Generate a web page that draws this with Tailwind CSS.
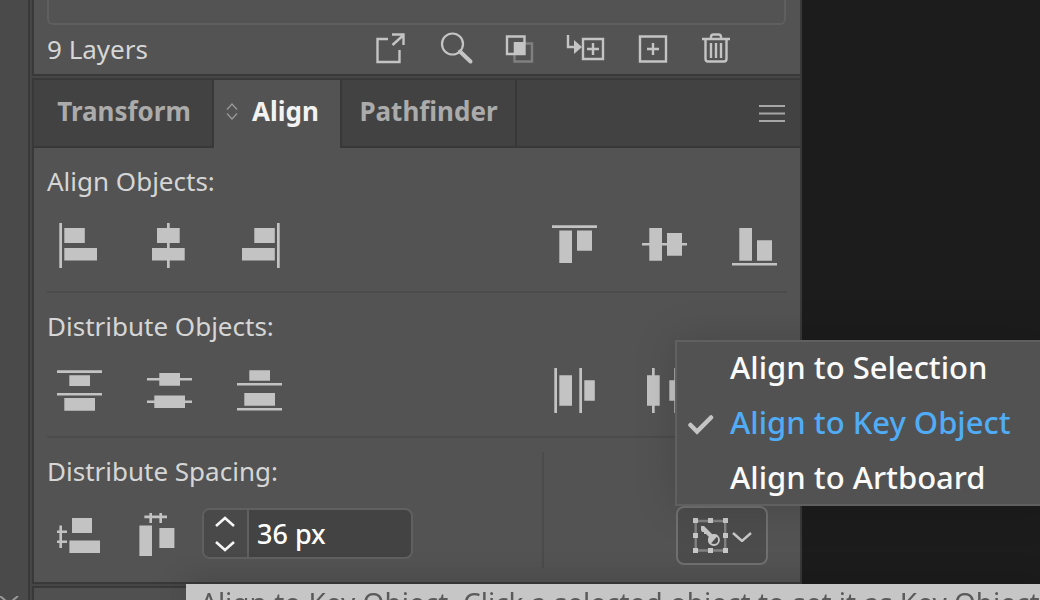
<!DOCTYPE html>
<html lang="en">
<head>
<meta charset="utf-8">
<meta name="viewport" content="width=device-width, initial-scale=1">
<title>Align panel</title>
<script src="https://cdn.jsdelivr.net/npm/@tailwindcss/browser@4"></script>
</head>
<body class="h-screen overflow-hidden bg-[#1c1c1c] font-['Noto_Sans','Open_Sans',sans-serif] text-[26px] leading-9 text-[#d6d6d6]">
<div class="flex min-h-full">

  <!-- Collapsed dock -->
  <aside class="flex w-7 shrink-0 flex-col justify-end bg-[#4a4a4a]" aria-label="Dock">
    <svg class="h-1 w-7" viewBox="0 0 28 4" fill="none" stroke="#999" stroke-width="2"><path d="M0 0 6 5M18 0 12 5"/></svg>
  </aside>

  <main class="flex min-w-0 flex-1 flex-col border-x-2 border-[#393939] bg-[#464646] pl-0.5">

    <!-- Layers panel footer -->
    <section class="border-b-2 border-l-2 border-[#393939] bg-[#535353] pr-3.5 pb-1.5 pl-[13px]" aria-label="Layers">
      <div class="h-[25px] rounded-b-md border-2 border-t-0 border-[#5f5f5f]"></div>
      <div class="flex h-[43px] items-center pt-1.5">
        <span class="flex-1 pb-0.5">9 Layers</span>
        <div class="mr-13 flex items-center gap-7 pb-1 text-[#c4c4c4]">
          <button type="button" aria-label="Collect for export"><svg class="size-9" viewBox="0 0 36 36" fill="none" stroke="currentColor" stroke-width="2.4"><path d="M14 9H3.500V32H25.500V20"/><path d="M18.500 15 29 5.500M18 4.500H29.500V15"/></svg></button>
          <button type="button" aria-label="Locate object"><svg class="size-9" viewBox="0 0 36 36" fill="none" stroke="currentColor"><circle cx="14.500" cy="14" r="10.500" stroke-width="2.200"/><path d="m22 21.500 10.500 10" stroke-width="4" stroke-linecap="round"/></svg></button>
          <button type="button" aria-label="Make clipping mask"><svg class="size-9" viewBox="0 0 36 36" fill="none" stroke="currentColor" stroke-width="2.400"><path d="M12.500 13.500h17.500v18H12.500z" stroke="#808080"/><path d="M12 12h11v11H12z" fill="currentColor" stroke="none"/><path d="M5 6.500h17.500v17.500H5z"/></svg></button>
          <button type="button" aria-label="Create new sublayer"><svg class="h-9 w-10" viewBox="0 0 40 36" fill="none" stroke="currentColor" stroke-width="2.400"><path d="M2 5v12h7"/><path d="m8 10 8 7-8 7z" fill="currentColor" stroke="none"/><path d="M17 9h20v20H17zM27 13v12M21 19h12"/></svg></button>
          <button type="button" aria-label="Create new layer"><svg class="size-9" viewBox="0 0 36 36" fill="none" stroke="currentColor" stroke-width="2.400"><path d="M6 6.500h26v25H6zM19 13v12M13 19h12"/></svg></button>
          <button type="button" aria-label="Delete selection"><svg class="size-9" viewBox="0 0 36 36" fill="none" stroke="currentColor" stroke-width="2.400"><path d="M4 9h28M7.500 9v20q0 2.500 2.500 2.500h16q2.500 0 2.500-2.500V9M13 9V7q0-2.500 2.500-2.500h5Q23 4.500 23 7v2M13 13v15M18 13v15M23 13v15"/></svg></button>
        </div>
      </div>
    </section>

    <!-- Tabbed panel -->
    <section class="mt-0.5 flex flex-col border-y-2 border-l-2 border-[#393939] bg-[#535353]">
      <div class="flex h-17 items-stretch bg-[#424242] font-bold text-[#ababab]" role="tablist">
        <button type="button" role="tab" aria-selected="false" class="w-45 border-r-2 border-b-2 border-[#383838] pb-1 pl-0.5">Transform</button>
        <button type="button" role="tab" aria-selected="true" class="flex w-[126px] items-center gap-3.5 bg-[#535353] pb-1.5 pl-3 text-[#f2f2f2]">
          <svg class="h-5 w-3 shrink-0" viewBox="0 0 12 20" fill="none" stroke="#999" stroke-width="1.300"><path d="M1 8.500 6 3l5 5.500M1 12.500 6 18l5-5.500"/></svg>
          Align</button>
        <button type="button" role="tab" aria-selected="false" class="w-[177px] border-x-2 border-b-2 border-[#383838] pb-1">Pathfinder</button>
        <div class="flex flex-1 items-center justify-end border-b-2 border-[#383838] pr-[15px]">
          <button type="button" aria-label="Panel menu"><svg class="h-5 w-[26px]" viewBox="0 0 26 20" stroke="#a6a6a6" stroke-width="2.200"><path d="M0 3h26M0 10.500h26M0 18h26"/></svg></button>
        </div>
      </div>

      <div class="flex flex-col pr-[11px] pl-[13px]" role="tabpanel">
        <section class="mr-0.5 h-[145px] border-b-2 border-[#4b4b4b] pt-[15px]">
          <h2>Align Objects:</h2>
          <div class="flex justify-between pt-6 pr-2.5 pl-2.5 text-[#c3c3c3]">
            <div class="flex gap-[45px]">
              <button type="button" aria-label="Horizontal align left"><svg class="size-[45px]" viewBox="0 0 45 45" fill="currentColor"><path d="M2.300 0H5v45H2.300zM7.300 5h20.500v15H7.300zM7.300 25H40v12.500H7.300z"/></svg></button>
              <button type="button" aria-label="Horizontal align center"><svg class="size-[45px]" viewBox="0 0 45 45" fill="currentColor"><path d="M20 0h2.700v45H20zM10 5h22.700v15H10zM5 25h32.700v12.500H5z"/></svg></button>
              <button type="button" aria-label="Horizontal align right"><svg class="size-[45px]" viewBox="0 0 45 45" fill="currentColor"><path d="M40 0h2.700v45H40zM17.300 5h20.500v15H17.300zM5 25h32.800v12.500H5z"/></svg></button>
            </div>
            <div class="flex gap-[45px]">
              <button type="button" aria-label="Vertical align top"><svg class="size-[45px]" viewBox="0 0 45 45" fill="currentColor"><path d="M0 2.300h45V5H0zM7.300 7.500H20V40H7.300zM25 7.500h15v20.300H25z"/></svg></button>
              <button type="button" aria-label="Vertical align center"><svg class="size-[45px]" viewBox="0 0 45 45" fill="currentColor"><path d="M0 20h45v2.500H0zM7.300 5H20v32.700H7.300zM25 10h15v22.700H25z"/></svg></button>
              <button type="button" aria-label="Vertical align bottom"><svg class="size-[45px]" viewBox="0 0 45 45" fill="currentColor"><path d="M0 40h45v2.600H0zM7.300 5H20v32.700H7.300zM25 17.300h15v20.400H25z"/></svg></button>
            </div>
          </div>
        </section>

        <section class="mr-0.5 h-[145px] border-b-2 border-[#4b4b4b] pt-[15px]">
          <h2>Distribute Objects:</h2>
          <div class="flex justify-between pt-6 pr-2.5 pl-2.5 text-[#c3c3c3]">
            <div class="flex gap-[45px]">
              <button type="button" aria-label="Vertical distribute top"><svg class="size-[45px]" viewBox="0 0 45 45" fill="currentColor"><path d="M0 2.300h45V5H0zM12.300 7.300H33V18H12.300zM0 25h45v2.600H0zM7.300 30H38v12.700H7.300z"/></svg></button>
              <button type="button" aria-label="Vertical distribute center"><svg class="size-[45px]" viewBox="0 0 45 45" fill="currentColor"><path d="M0 10h45v2.600H0zM12.300 5H33v12.700H12.300zM0 32.400h45V35H0zM7.300 27.500H38V40H7.300z"/></svg></button>
              <button type="button" aria-label="Vertical distribute bottom"><svg class="size-[45px]" viewBox="0 0 45 45" fill="currentColor"><path d="M12.300 2.300H33v10.400H12.300zM0 15h45v2.600H0zM7.300 25H38v12.700H7.300zM0 40h45v2.600H0z"/></svg></button>
            </div>
            <div class="flex gap-[45px]">
              <button type="button" aria-label="Horizontal distribute left"><svg class="size-[45px]" viewBox="0 0 45 45" fill="currentColor"><path d="M2.300 0H5v45H2.300zM7.300 7.300H20v30.400H7.300zM27.300 0H30v45h-2.700zM32.300 12.300h10.500v20.500H32.300z"/></svg></button>
              <button type="button" aria-label="Horizontal distribute center"><svg class="size-[45px]" viewBox="0 0 45 45" fill="currentColor"><path d="M10 0h2.700v45H10zM5 7.300h12.700v30.400H5zM32.300 0H35v45h-2.700zM27.300 12.300h11v20.500h-11z"/></svg></button>
              <button type="button" aria-label="Horizontal distribute right"><svg class="size-[45px]" viewBox="0 0 45 45" fill="currentColor"><path d="M15 0h2.700v45H15zM2.300 12.300h10.500v20.500H2.300zM40 0h2.700v45H40zM25 7.300h12.700v30.400H25z"/></svg></button>
            </div>
          </div>
        </section>

        <section class="flex h-36 justify-between">
          <div class="pt-[15px]">
            <h2 id="spacing">Distribute Spacing:</h2>
            <div class="flex pt-[19px] pl-2.5 text-[#c3c3c3]">
              <button type="button" class="mt-1" aria-label="Vertical distribute space"><svg class="size-[45px]" viewBox="0 0 45 45" fill="currentColor"><path d="M2.400 12.500H5V35H2.400zM0 17.500h10V20H0zM0 27.500h10V30H0zM15 5h20v15H15zM12.400 27.500H43V40H12.400z"/></svg></button>
              <button type="button" class="mt-1 ml-[35px]" aria-label="Horizontal distribute space"><svg class="size-[45px]" viewBox="0 0 45 45" fill="currentColor"><path d="M12.400 0H15v10h-2.600zM22.400 0H25v10h-2.600zM7.400 2.600H30v2.600H7.400zM2.400 12.400H15V43H2.400zM22.400 15h15v20h-15z"/></svg></button>
              <div class="ml-5 flex h-[51px] w-[211px] overflow-hidden rounded-lg border-2 border-[#606060] bg-[#434343]">
                <div class="flex w-[45px] shrink-0 flex-col items-center justify-center gap-2 border-r-2 border-[#606060] bg-[#494949] pr-px text-[#f5f5f5]">
                  <button type="button" aria-label="Increase spacing"><svg class="h-4 w-5" viewBox="0 0 20 16" fill="none" stroke="currentColor" stroke-width="2.600"><path d="m1 12 9-8 9 8"/></svg></button>
                  <button type="button" aria-label="Decrease spacing"><svg class="h-4 w-5" viewBox="0 0 20 16" fill="none" stroke="currentColor" stroke-width="2.600"><path d="m1 4 9 8 9-8"/></svg></button>
                </div>
                <input type="text" value="36 px" aria-labelledby="spacing" class="w-full min-w-0 bg-transparent px-2 text-[27px] font-medium text-white outline-none">
              </div>
            </div>
          </div>

          <div class="mt-3.5 mb-3.5 flex items-end border-l-2 border-[#4b4b4b] pr-[21px] pb-[3px] pl-[132px]">
            <div class="relative">
              <button type="button" aria-label="Align to" aria-haspopup="menu" aria-expanded="true" class="flex h-[59px] w-[92px] items-center gap-[3px] rounded-lg border-2 border-[#707070] bg-[#4c4c4c] pl-[15px] text-[#c8c8c8]">
                <svg class="size-9 shrink-0" viewBox="0 0 36 36" fill="currentColor"><path d="M2.700 3h29.500v29.500H2.700z" fill="none" stroke="#828282" stroke-width="2.400"/><path d="M0 0h5v5H0zM15 0h5v5h-5zM30 0h5v5h-5zM0 15h5v5H0zM30 15h5v5h-5zM0 30h5v5H0zM15 30h5v5h-5zM30 30h5v5h-5z"/><path d="m8 8 3 0 8 8 1 3-3 1-4-4-2 0 0-2-2 0-1-2z"/><circle cx="21" cy="22" r="5" fill="none" stroke="currentColor" stroke-width="1.800"/><path d="M17 26.500a6 6 0 0 1 8-9z"/></svg>
                <svg class="h-3 w-5 shrink-0" viewBox="0 0 20 12" fill="none" stroke="currentColor" stroke-width="2.400"><path d="m1 3 9 8 9-8"/></svg>
              </button>
              <div role="menu" aria-label="Align to" class="absolute bottom-full -left-px z-10 flex h-[166px] w-[380px] flex-col border-2 border-[#606060] bg-[#525252] text-[31px] leading-[55px] font-medium text-[#fafafa] shadow-[0_0_40px_rgba(0,0,0,0.15)]">
                <button type="button" role="menuitemradio" aria-checked="false" class="-mt-0.5 flex h-[55px] items-center pl-[53px]">Align to Selection</button>
                <button type="button" role="menuitemradio" aria-checked="true" class="flex h-[55px] items-center gap-4 pl-2.5 text-[#50adf5]">
                  <svg class="h-6 w-[27px] shrink-0" viewBox="0 0 27 24" fill="none" stroke="#c4c4c4" stroke-width="4.500" stroke-linecap="round"><path d="m3.500 14 6.500 6.500L24 6.500"/></svg>
                  Align to Key Object</button>
                <button type="button" role="menuitemradio" aria-checked="false" class="flex h-[55px] items-center pl-[53px]">Align to Artboard</button>
              </div>
            </div>
          </div>
        </section>
      </div>
    </section>

    <section class="mt-0.5 flex-1 border-t-2 border-l-2 border-[#393939] bg-[#505050]"></section>
  </main>

  <!-- Canvas -->
  <div class="w-[238px] shrink-0 bg-[#1c1c1c]"></div>
</div>

<div role="tooltip" class="fixed right-0 bottom-0 left-[186px] z-20 h-4 overflow-hidden bg-[#c6c6c6] pl-3.5 text-[28px] whitespace-nowrap text-[#5a5a5a] shadow-[0_0_30px_rgba(0,0,0,0.25)]">Align to Key Object. Click a selected object to set it as Key Object</div>
</body>
</html>
